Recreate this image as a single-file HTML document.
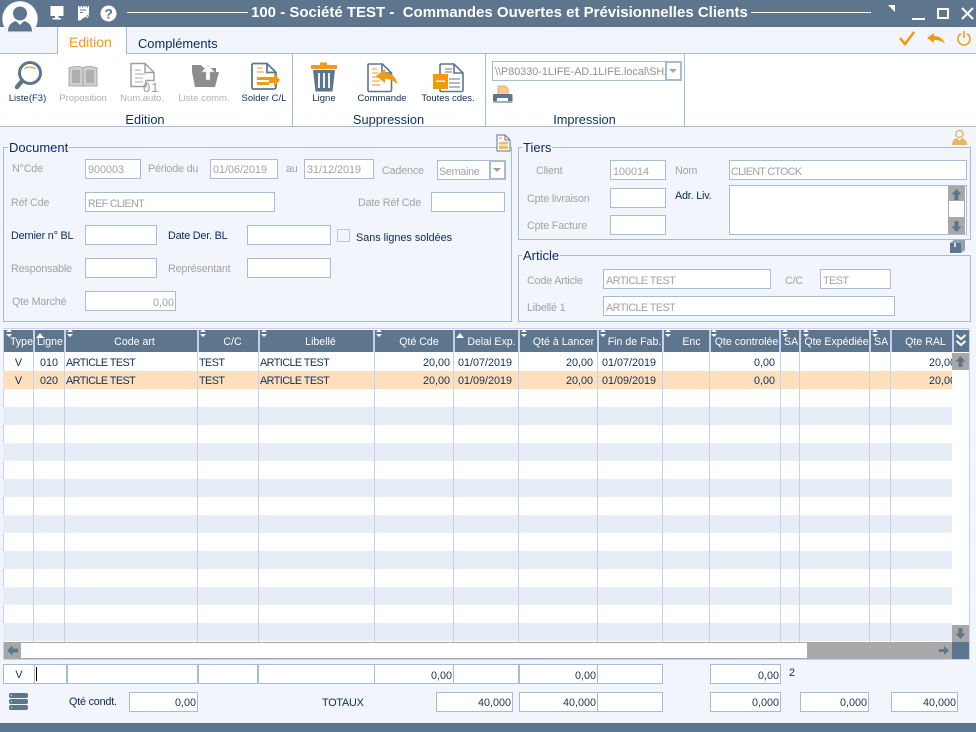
<!DOCTYPE html>
<html><head><meta charset="utf-8"><style>
html,body{margin:0;padding:0}
body{width:976px;height:732px;position:relative;overflow:hidden;background:#f2f5fb;font-family:"Liberation Sans",sans-serif;font-size:10.8px;letter-spacing:-.2px;color:#10305a}
div,span,svg{position:absolute;box-sizing:border-box}
.t{white-space:nowrap;line-height:12px}
.g{color:#a3a3a3;margin-top:2px}
.d{color:#0c2a55;margin-top:2px}
.f{background:#fff;border:1px solid #a9bccf;height:20px;color:#a3a3a3;line-height:22px;padding:0 2px;white-space:nowrap;overflow:hidden;font-size:10.8px;letter-spacing:0}
.u{letter-spacing:-.55px}
.n{color:#1a3358;text-align:right;padding-right:1px}
.fs{border:1px solid #a9bccf}
.lg{background:#f2f5fb;font-size:13px;letter-spacing:0;color:#0c2a6a;padding:0 1px;line-height:14px;white-space:nowrap}
.tb{font-size:9.5px;letter-spacing:0;line-height:11px;white-space:nowrap;text-align:center;top:93px;color:#10305a}
.tbg{color:#b0b0b0}
.gl{font-size:12.8px;letter-spacing:0;top:113px;line-height:14px;text-align:center;color:#10305a}
.h{top:330px;height:22px;background:#5e758e;color:#fff;text-align:center;line-height:25px;font-size:10.6px;letter-spacing:0;white-space:nowrap;overflow:hidden}
.s{top:352px;width:1px;height:290px;background:#c4d2f0}
.b{left:3px;width:949px;height:18px;background:#e7edf6}
.c{height:18px;line-height:20px;white-space:nowrap;color:#10305a;font-size:10.8px;letter-spacing:-.55px}
.m{letter-spacing:0}
.r{text-align:right}
.ar{width:0;height:0}
</style></head><body>

<!-- title bar -->
<div style="left:0;top:0;width:976px;height:27px;background:#5e758e"></div>
<div style="left:127px;top:12px;width:121px;height:1px;background:#fff"></div>
<div style="left:751px;top:12px;width:120px;height:1px;background:#fff"></div>
<div class="t" style="left:251px;top:5px;font-size:15px;letter-spacing:0;line-height:16px;font-weight:bold;color:#fff;white-space:pre">100 - Société TEST -  Commandes Ouvertes et Prévisionnelles Clients</div>

<svg style="left:0;top:0" width="44" height="40" viewBox="0 0 44 40"><path d="M9 32.500A17.500 17.500 0 1 1 31 32.500z" fill="#fff" stroke="#dfe5ee" stroke-width=".6"/><circle cx="20" cy="13.500" r="7" fill="#5e758e"/><path d="M8 31.500c0-6 3-9 8-10.500l4 4 4-4c5 1.500 8 4.500 8 10.500z" fill="#5e758e"/></svg>
<svg style="left:49px;top:5px" width="16" height="16" viewBox="0 0 16 16"><path d="M1.500 1h13v10h-13z" fill="#fff"/><path d="M6 11h3.500v2H12v1.500H3.500V13H6z" fill="#fff"/></svg>
<svg style="left:77px;top:5px" width="13" height="16" viewBox="0 0 13 16"><path d="M1 1h11v8L3 15.500H1z" fill="#fff"/><path d="M3 1v1.500M5.500 1v1.500M8 1v1.500M10.500 1v1.500" stroke="#5e758e"/><path d="M3 15l5-4 2 1.500 2-2.500" stroke="#fff" fill="none"/><rect x="3" y="4.500" width="6" height="1" fill="#5e758e"/><rect x="3" y="7" width="3" height="1" fill="#5e758e"/></svg>
<svg style="left:100px;top:5px" width="17" height="17" viewBox="0 0 17 17"><circle cx="8.500" cy="8.500" r="8" fill="#fff"/><text x="8.500" y="13.500" text-anchor="middle" font-family="Liberation Sans" font-weight="bold" font-size="14" fill="#5e758e">?</text></svg>

<svg style="left:885px;top:3px" width="91" height="20" viewBox="0 0 91 20"><path d="M3 2h7v7z" fill="#fff"/><rect x="27" y="15" width="13" height="2" fill="#fff"/><rect x="53" y="6" width="10" height="9" fill="none" stroke="#fff" stroke-width="2"/><path d="M77 5l11 11M88 5L77 16" stroke="#fff" stroke-width="2"/></svg>
<svg style="left:898px;top:30px" width="76" height="17" viewBox="0 0 76 17"><path d="M2 8l5 6 9-12" fill="none" stroke="#f39a14" stroke-width="2.600"/><path d="M29 8l7-5v3c5 0 9 2 11 8-3-3-6-4-11-4v3z" fill="#f39a14"/><path d="M63 3.800a6 6 0 1 0 6 0" fill="none" stroke="#f39a14" stroke-width="1.500"/><path d="M66 1v7" stroke="#f39a14" stroke-width="1.500"/></svg>

<!-- tabs -->
<div style="left:57px;top:27px;width:70px;height:27px;background:#fff;border:1px solid #a9bccf;border-top:0;border-bottom:0"></div>
<div style="left:0;top:53px;width:57px;height:1px;background:#a9bccf"></div>
<div style="left:127px;top:53px;width:849px;height:1px;background:#a9bccf"></div>
<div class="t" style="left:69px;top:34px;font-size:14px;letter-spacing:0;line-height:16px;color:#f39a14">Edition</div>
<div class="t" style="left:138px;top:37px;font-size:12.900px;letter-spacing:0;line-height:14px;color:#0c2a55">Compléments</div>

<!-- ribbon -->
<div style="left:0;top:54px;width:976px;height:72px;background:#fff"></div>
<div style="left:0;top:126px;width:976px;height:1px;background:#a9bccf"></div>
<div style="left:292px;top:54px;width:1px;height:72px;background:#a9bccf"></div>
<div style="left:485px;top:54px;width:1px;height:72px;background:#a9bccf"></div>
<div style="left:684px;top:54px;width:1px;height:72px;background:#a9bccf"></div>

<svg style="left:0;top:54px" width="292" height="40" viewBox="0 0 292 40">
<circle cx="30" cy="19" r="10.500" fill="#fff" stroke="#5e758e" stroke-width="3"/><path d="M24.500 15c2-2.500 8-2.500 11 0" fill="none" stroke="#f39a14" stroke-width="1.300"/><path d="M22 27l-5 6" stroke="#5e758e" stroke-width="4.400" stroke-linecap="round"/>
<path d="M69 14c6-2 11-2 14 0 3-2 8-2 14 0v18H83 69z" fill="#cfcfcf" stroke="#a8a8a8"/><path d="M83 14v18" stroke="#a0a0a0"/><path d="M72 16h8v13h-8zM86 16h8v13h-8z" fill="#aeaeae"/>
<path d="M131 9.500h14l9 9v8h-8v6h-15z" fill="#fff" stroke="#a0a0a0" stroke-width="1.500"/><path d="M145 9.500v9h9" fill="none" stroke="#a0a0a0" stroke-width="1.500"/><path d="M135 16h6M135 20h10M135 24h8M135 28h8" stroke="#a8a8a8"/><text x="143" y="38" font-family="Liberation Sans" font-size="13" fill="#9c9c9c" letter-spacing="1">01</text>
<path d="M192 11h9l3 3h12l0 4h3l-4 15h-20l-3-15h0z" fill="#8d8d8d"/><path d="M208 11l6.500 7h-4.500v8h-4v-8h-4.500z" fill="#fff" stroke="#b5b5b5" stroke-width=".5"/>
<path d="M253 9.500h14l9 9V33a2 2 0 0 1-2 2h-21a1.500 1.500 0 0 1-1-1V10.500z" fill="#fff" stroke="#5e758e" stroke-width="1.800"/><path d="M267 9.500v9h9" fill="none" stroke="#5e758e" stroke-width="1.800"/><path d="M257 14h5M257 18h7" stroke="#f39a14"/><path d="M257 23h12v3h-12zM257 28h12v3h-12z" fill="#f39a14"/><path d="M269 23h5v-4l6 7-6 7v-4h-5z" fill="#f39a14"/>
</svg>
<svg style="left:293px;top:54px" width="190" height="40" viewBox="293 54 190 40">
<path d="M311 65h9v-2.500h7V65h10v4h-26z" fill="#f39a14"/><path d="M313 70h22l-2.500 21.500H315.500z" fill="#5e758e"/><path d="M319 73v15M324 73v15M329 73v15" stroke="#fff" stroke-width="1.800"/>
<path d="M368.500 64h14l9 9v17a1.500 1.500 0 0 1-1.500 1.500h-21a1.500 1.500 0 0 1-1-1V64.500z" fill="#fff" stroke="#5e758e" stroke-width="1.600"/><path d="M382 64v9h9" fill="none" stroke="#5e758e" stroke-width="1.600"/><path d="M372 69h5M372 73h6M372 77h10M372 81h8M372 85h8" stroke="#f39a14"/><path d="M376 76l9-7v4c6 0 11 3 12.500 12-3-4-7-6-12.500-6v4z" fill="#f39a14"/>
<path d="M441 64h13l9 9v17a1.500 1.500 0 0 1-1.500 1.500H441a1.500 1.500 0 0 1-1-1V65z" fill="#fff" stroke="#5e758e" stroke-width="1.600"/><path d="M454 64v9h9" fill="none" stroke="#5e758e" stroke-width="1.600"/><path d="M445 69h7M445 72h7M449 79h11M449 83h11M449 87h11" stroke="#5e758e"/><rect x="433" y="74" width="15" height="15" fill="#f39a14"/><rect x="436" y="80.500" width="9" height="1.500" fill="#fff"/>
</svg>

<div class="tb" style="left:0;width:55px">Liste(F3)</div>
<div class="tb tbg" style="left:55px;width:56px">Proposition</div>
<div class="tb tbg" style="left:114px;width:56px">Num.auto.</div>
<div class="tb tbg" style="left:172px;width:64px">Liste comm.</div>
<div class="tb" style="left:236px;width:56px">Solder C/L</div>
<div class="tb" style="left:296px;width:56px">Ligne</div>
<div class="tb" style="left:352px;width:60px">Commande</div>
<div class="tb" style="left:416px;width:64px">Toutes cdes.</div>
<div class="gl" style="left:0;width:290px">Edition</div>
<div class="gl" style="left:293px;width:191px">Suppression</div>
<div class="gl" style="left:486px;width:197px">Impression</div>

<div class="f" style="left:492px;top:61px;width:190px;line-height:21px;color:#909090">\\P80330-1LIFE-AD.1LIFE.local\SHA</div>
<div style="left:665px;top:61px;width:17px;height:20px;background:#fff;border:2px solid #a9bccf"></div>
<div class="ar" style="left:669px;top:69px;border-left:4px solid transparent;border-right:4px solid transparent;border-top:4px solid #a8a8a8"></div>
<svg style="left:492px;top:85px" width="22" height="20" viewBox="0 0 22 20"><path d="M6 1h7l3 3v6H6z" fill="#f6c996" stroke="#f39a14" stroke-width=".7"/><path d="M2 9h17a1.500 1.500 0 0 1 1.500 1.500V16H1v-5.500A1.500 1.500 0 0 1 2 9z" fill="#5e758e"/><rect x="5" y="13" width="11" height="3" fill="#fff"/><rect x="1" y="16" width="19.500" height="2" fill="#9fb0c2"/></svg>

<!-- Document -->
<div class="fs" style="left:3px;top:147px;width:509px;height:175px"></div>
<div class="lg" style="left:8px;top:141px">Document</div>
<svg style="left:496px;top:134px" width="15" height="18" viewBox="0 0 15 18"><path d="M1 1h8l5 5v11H1z" fill="#fff" stroke="#5e758e"/><path d="M9 1v5h5" fill="none" stroke="#5e758e"/><path d="M3 8h9v7H3z" fill="#f6b766"/><path d="M3 11h9" stroke="#fff"/><path d="M3 4h3" stroke="#f39a14"/></svg>

<div class="t g" style="left:12px;top:161px">N°Cde</div>
<div class="f" style="left:85px;top:159px;width:56px;line-height:20px">900003</div>
<div class="t g" style="left:148px;top:161px">Période du</div>
<div class="f" style="left:210px;top:159px;width:68px;line-height:20px">01/06/2019</div>
<div class="t g" style="left:286px;top:161px">au</div>
<div class="f" style="left:304px;top:159px;width:70px;line-height:20px">31/12/2019</div>
<div class="t g" style="left:382px;top:163px">Cadence</div>
<div class="f" style="left:437px;top:160px;width:68px;padding-left:1px;letter-spacing:-.3px">Semaine</div>
<div style="left:489px;top:160px;width:17px;height:20px;background:#fff;border:2px solid #a9bccf"></div>
<div class="ar" style="left:493px;top:168px;border-left:4px solid transparent;border-right:4px solid transparent;border-top:4px solid #a0a0a0"></div>

<div class="t g" style="left:11px;top:195px">Réf Cde</div>
<div class="f" style="left:85px;top:192px;width:190px;letter-spacing:-.7px">REF CLIENT</div>
<div class="t g" style="left:358px;top:195px">Date Réf Cde</div>
<div class="f" style="left:431px;top:192px;width:74px"></div>

<div class="t d" style="left:11px;top:228px">Dernier n° BL</div>
<div class="f" style="left:85px;top:225px;width:72px"></div>
<div class="t d" style="left:168px;top:228px">Date Der. BL</div>
<div class="f" style="left:247px;top:225px;width:84px"></div>
<div style="left:337px;top:229px;width:13px;height:13px;border:1px solid #bfc8d2;background:#f2f5fb"></div>
<div class="t d" style="left:356px;top:230px;letter-spacing:0">Sans lignes soldées</div>

<div class="t g" style="left:11px;top:261px">Responsable</div>
<div class="f" style="left:85px;top:258px;width:72px"></div>
<div class="t g" style="left:168px;top:261px">Représentant</div>
<div class="f" style="left:247px;top:258px;width:84px"></div>

<div class="t g" style="left:12px;top:294px">Qte Marché</div>
<div class="f" style="left:85px;top:291px;width:91px;text-align:right;padding-right:1px">0,00</div>

<!-- Tiers -->
<div class="fs" style="left:518px;top:147px;width:453px;height:93px"></div>
<div class="lg" style="left:522px;top:141px">Tiers</div>
<svg style="left:951px;top:129px" width="17" height="17" viewBox="0 0 17 17"><circle cx="8.500" cy="5" r="3.500" fill="#fff" stroke="#e3a951" stroke-width="1.300"/><path d="M1 16c0-4 2-6 5-7l2.500 3L11 9c3 1 5 3 5 7z" fill="#e8b566"/></svg>
<div class="t g" style="left:536px;top:163px">Client</div>
<div class="f" style="left:610px;top:160px;width:56px">100014</div>
<div class="t g" style="left:675px;top:163px">Nom</div>
<div class="f" style="left:729px;top:160px;width:238px;padding-left:1px;letter-spacing:-.7px">CLIENT CTOCK</div>
<div class="t g" style="left:527px;top:191px">Cpte livraison</div>
<div class="f" style="left:610px;top:188px;width:56px"></div>
<div class="t d" style="left:675px;top:188px">Adr. Liv.</div>
<div class="f" style="left:729px;top:185px;width:238px;height:50px"></div>
<div style="left:948px;top:186px;width:17px;height:48px;background:#a8a8a8"></div>
<div style="left:949px;top:201px;width:15px;height:16px;background:#fff"></div>
<div class="t g" style="left:527px;top:218px">Cpte Facture</div>
<div class="f" style="left:610px;top:215px;width:56px"></div>
<svg style="left:950px;top:188px" width="13" height="46" viewBox="0 0 13 46"><path d="M6.500 1l5 5.500H8.500V12h-4V6.500h-3z" fill="#5e758e"/><path d="M6.500 44l5-5.500H8.500V33h-4v5.500h-3z" fill="#5e758e"/></svg>

<!-- Article -->
<div class="fs" style="left:518px;top:255px;width:453px;height:67px"></div>
<div class="lg" style="left:522px;top:249px">Article</div>
<svg style="left:949px;top:239px" width="17" height="15" viewBox="0 0 17 15"><path d="M1 4h11v10H1z" fill="#5e758e"/><path d="M1 4l4-3h11l-4 3zM12 4l4-3v10l-4 3z" fill="#8ea1b5"/><path d="M6 4v4" stroke="#fff" stroke-width="1.500"/></svg>
<div class="t g" style="left:527px;top:273px">Code Article</div>
<div class="f u" style="left:603px;top:269px;width:168px">ARTICLE TEST</div>
<div class="t g" style="left:785px;top:273px">C/C</div>
<div class="f u" style="left:820px;top:269px;width:71px">TEST</div>
<div class="t g" style="left:527px;top:300px">Libellé 1</div>
<div class="f u" style="left:603px;top:296px;width:292px">ARTICLE TEST</div>

<!-- Grid -->
<div style="left:3px;top:328px;width:967px;height:332px;background:#fff;border:1px solid #c4d2f0"></div>
<div style="left:4px;top:330px;width:965px;height:22px;background:#c4d2f0"></div>
<div class="b" style="top:371px;background:#fddfbb"></div>
<div class="b" style="top:407px"></div><div class="b" style="top:443px"></div><div class="b" style="top:479px"></div><div class="b" style="top:515px"></div><div class="b" style="top:551px"></div><div class="b" style="top:587px"></div><div class="b" style="top:623px"></div>

<div class="h" style="left:4px;width:29px;text-align:left;padding-left:6px">Type</div>
<div class="h" style="left:35px;width:29px;padding-left:1px">Ligne</div>
<div class="h" style="left:66px;width:131px;padding-left:6px">Code art</div>
<div class="h" style="left:199px;width:59px;padding-left:8px">C/C</div>
<div class="h" style="left:260px;width:113px;padding-left:8px">Libellé</div>
<div class="h" style="left:375px;width:78px;padding-left:10px">Qté Cde</div>
<div class="h" style="left:455px;width:63px;padding-left:10px">Delai Exp.</div>
<div class="h" style="left:520px;width:77px;padding-left:10px">Qté à Lancer</div>
<div class="h" style="left:599px;width:63px;padding-left:8px">Fin de Fab.</div>
<div class="h" style="left:664px;width:45px;padding-left:10px">Enc</div>
<div class="h" style="left:711px;width:68px;padding-left:3px">Qte controlée</div>
<div class="h" style="left:781px;width:18px;text-align:left;padding-left:3px">SA</div>
<div class="h" style="left:801px;width:68px;padding-left:3px">Qte Expédiée</div>
<div class="h" style="left:871px;width:19px;text-align:left;padding-left:3px">SA</div>
<div class="h" style="left:892px;width:60px;padding-left:7px">Qte RAL</div>
<div class="h" style="left:954px;width:15px"></div>
<svg style="left:955px;top:334px" width="12" height="14" viewBox="0 0 12 14"><path d="M1.500 1l4.500 4 4.500-4M1.500 7l4.500 4 4.500-4" fill="none" stroke="#fff" stroke-width="2"/></svg>

<svg style="left:0;top:328px" width="976" height="14" viewBox="0 0 976 14" fill="#fff"><g><path d="M6 4l3-3 3 3zM6 6l3 3 3-3zM67 4l3-3 3 3zM67 6l3 3 3-3zM200 4l3-3 3 3zM200 6l3 3 3-3zM261 4l3-3 3 3zM261 6l3 3 3-3zM376 4l3-3 3 3zM376 6l3 3 3-3zM521 4l3-3 3 3zM521 6l3 3 3-3zM600 4l3-3 3 3zM600 6l3 3 3-3zM665 4l3-3 3 3zM665 6l3 3 3-3zM711 4l3-3 3 3zM711 6l3 3 3-3zM782 4l3-3 3 3zM782 6l3 3 3-3zM803 4l3-3 3 3zM803 6l3 3 3-3zM872 4l3-3 3 3zM872 6l3 3 3-3z"/><path d="M36 10l4-5 4 5zM456 10l4-5 4 5z"/></g></svg>

<div class="s" style="left:33px"></div><div class="s" style="left:64px"></div><div class="s" style="left:197px"></div><div class="s" style="left:258px"></div><div class="s" style="left:374px"></div><div class="s" style="left:453px"></div><div class="s" style="left:518px"></div><div class="s" style="left:597px"></div><div class="s" style="left:662px"></div><div class="s" style="left:709px"></div><div class="s" style="left:780px"></div><div class="s" style="left:799px"></div><div class="s" style="left:869px"></div><div class="s" style="left:890px"></div>

<div class="c m" style="top:353px;left:4px;width:29px;text-align:center">V</div>
<div class="c m" style="top:353px;left:35px;width:28px;text-align:center">010</div>
<div class="c" style="top:353px;left:66px">ARTICLE TEST</div>
<div class="c" style="top:353px;left:199px">TEST</div>
<div class="c" style="top:353px;left:260px">ARTICLE TEST</div>
<div class="c m r" style="top:353px;left:375px;width:75px">20,00</div>
<div class="c m" style="top:353px;left:458px">01/07/2019</div>
<div class="c m r" style="top:353px;left:520px;width:73px">20,00</div>
<div class="c m" style="top:353px;left:602px">01/07/2019</div>
<div class="c m r" style="top:353px;left:711px;width:64px">0,00</div>
<div class="c m" style="top:353px;left:929px">20,00</div>

<div class="c m" style="top:371px;left:4px;width:29px;text-align:center">V</div>
<div class="c m" style="top:371px;left:35px;width:28px;text-align:center">020</div>
<div class="c" style="top:371px;left:66px">ARTICLE TEST</div>
<div class="c" style="top:371px;left:199px">TEST</div>
<div class="c" style="top:371px;left:260px">ARTICLE TEST</div>
<div class="c m r" style="top:371px;left:375px;width:75px">20,00</div>
<div class="c m" style="top:371px;left:458px">01/09/2019</div>
<div class="c m r" style="top:371px;left:520px;width:73px">20,00</div>
<div class="c m" style="top:371px;left:602px">01/09/2019</div>
<div class="c m r" style="top:371px;left:711px;width:64px">0,00</div>
<div class="c m" style="top:371px;left:929px">20,00</div>

<!-- V scrollbar -->
<div style="left:952px;top:353px;width:17px;height:289px;background:#fff"></div>
<div style="left:952px;top:353px;width:17px;height:17px;background:#a8a8a8"></div>
<div style="left:952px;top:625px;width:17px;height:17px;background:#a8a8a8"></div>
<svg style="left:954px;top:355px" width="13" height="13" viewBox="0 0 13 13"><path d="M6.500 1l5 5.500H8.500V12h-4V6.500h-3z" fill="#5e758e"/></svg>
<svg style="left:954px;top:627px" width="13" height="13" viewBox="0 0 13 13"><path d="M6.500 12l5-5.500H8.500V1h-4v5.500h-3z" fill="#5e758e"/></svg>

<!-- H scrollbar -->
<div style="left:4px;top:642px;width:948px;height:17px;background:#fff;border-top:1px solid #a8a8a8;border-bottom:1px solid #a8a8a8"></div>
<div style="left:4px;top:642px;width:17px;height:17px;background:#a8a8a8"></div>
<div style="left:807px;top:642px;width:145px;height:17px;background:#a8a8a8"></div>
<div style="left:952px;top:642px;width:17px;height:17px;background:#5e758e"></div>
<svg style="left:6px;top:644px" width="13" height="13" viewBox="0 0 13 13"><path d="M1 6.500L6.500 1.500v3H12v4H6.500v3z" fill="#5e758e"/></svg>
<svg style="left:937px;top:644px" width="13" height="13" viewBox="0 0 13 13"><path d="M12 6.500L7 2v3H2v3h5v3z" fill="#5e758e"/></svg>

<!-- Bottom row 1 -->
<div class="f" style="left:3px;top:664px;width:32px;color:#1a3358;text-align:center;line-height:20px">V</div>
<div class="f" style="left:34px;top:664px;width:33px"></div>
<div style="left:36px;top:667px;width:1px;height:14px;background:#000"></div>
<div class="f" style="left:67px;top:664px;width:131px"></div>
<div class="f" style="left:198px;top:664px;width:60px"></div>
<div class="f" style="left:258px;top:664px;width:117px"></div>
<div class="f n" style="left:374px;top:664px;width:80px">0,00</div>
<div class="f" style="left:453px;top:664px;width:66px"></div>
<div class="f n" style="left:519px;top:664px;width:79px">0,00</div>
<div class="f" style="left:597px;top:664px;width:66px"></div>
<div class="f n" style="left:710px;top:664px;width:71px">0,00</div>
<div class="t d" style="left:789px;top:665px">2</div>

<!-- Bottom row 2 -->
<svg style="left:9px;top:693px" width="20" height="18" viewBox="0 0 20 18"><rect x="0" y="0" width="19" height="5" rx="2" fill="#5e758e"/><rect x="0" y="6" width="19" height="5" rx="2" fill="#5e758e"/><rect x="0" y="12" width="19" height="5" rx="2" fill="#5e758e"/><path d="M2 2.500h1M2 8.500h1M2 14.500h1" stroke="#fff"/></svg>
<div class="t d" style="left:69px;top:694px">Qté condt.</div>
<div class="f n" style="left:129px;top:692px;width:69px;line-height:20px">0,00</div>
<div class="t d" style="left:322px;top:695px">TOTAUX</div>
<div class="f n" style="left:436px;top:692px;width:77px;line-height:20px">40,000</div>
<div class="f n" style="left:519px;top:692px;width:79px;line-height:20px">40,000</div>
<div class="f" style="left:597px;top:692px;width:66px"></div>
<div class="f n" style="left:710px;top:692px;width:71px;line-height:20px">0,000</div>
<div class="f n" style="left:800px;top:692px;width:69px;line-height:20px">0,000</div>
<div class="f n" style="left:891px;top:692px;width:67px;line-height:20px">40,000</div>

<div style="left:0;top:723px;width:976px;height:9px;background:#5e758e"></div>
</body></html>
